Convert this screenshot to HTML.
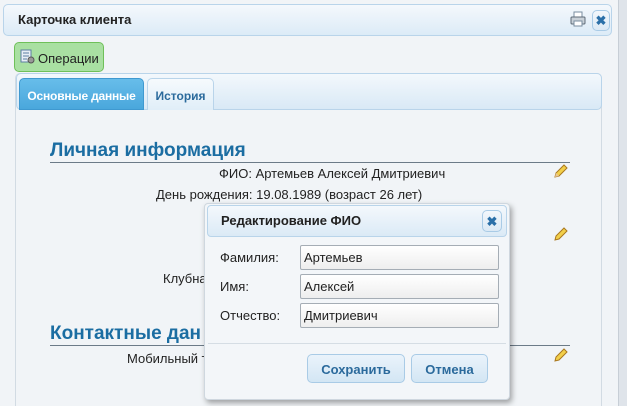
<!DOCTYPE html>
<html><head><meta charset="utf-8"><style>
*{box-sizing:border-box;margin:0;padding:0}
html,body{width:627px;height:406px;overflow:hidden}
body{background:#dfe4ea;font-family:"Liberation Sans",sans-serif;font-size:13px;color:#222;position:relative}
.abs{position:absolute}
.win{left:0;top:0;width:619px;height:406px;background:#f1f4f7;border-right:1px solid #c7ced6}
.hdr{left:3px;top:4px;width:609px;height:32px;border:1px solid #b9d4ea;border-radius:5px;background:linear-gradient(#f4f8fc,#dcebf7)}
.title{left:18px;top:12px;font-weight:bold;font-size:13px;color:#222}
.xbtn{border:1px solid #a9cbe6;border-radius:5px;background:linear-gradient(#f2f7fc,#dbe9f5);color:#2a6fa8;font-weight:bold;text-align:center}
.ops{left:14px;top:42px;width:90px;height:30px;border:1px solid #6fc05a;border-radius:5px;background:#a9e0a2;font-size:13px;padding:8px 0 0 23px;color:#222}
.tabs{left:16px;top:73px;width:586px;height:37px;border:1px solid #b9d4ea;border-radius:5px;background:linear-gradient(#f3f8fc,#d9e9f6)}
.panel{left:15px;top:73px;width:587px;height:333px;border:1px solid #d2dbe3;border-bottom:none;border-radius:5px 5px 0 0}
.tab1{left:19px;top:78px;width:125px;height:32px;border-radius:5px 5px 0 0;background:linear-gradient(#67bdea,#4aa7dc);color:#fff;font-weight:bold;font-size:12px;letter-spacing:-0.2px;text-align:center;padding-top:10px;border:1px solid #3f99d0;white-space:nowrap}
.tab2{left:147px;top:78px;width:67px;height:32px;border-radius:5px 5px 0 0;background:linear-gradient(#f6fafd,#e0eef8);color:#2b6a9c;font-size:12px;font-weight:bold;text-align:center;padding-top:10px;border:1px solid #b9d4ea;border-bottom:none}
.h{font-size:19px;font-weight:bold;color:#1b6da2}
.line{height:1px;background:#6c7b88}
.t{font-size:13px;color:#222;white-space:nowrap}
.dlg{left:204px;top:203px;width:306px;height:197px;background:#f3f6f9;border:1px solid #cfd7df;border-radius:4px;box-shadow:2px 3px 6px rgba(0,0,0,.35)}
.dh{left:207px;top:205px;width:300px;height:32px;border:1px solid #b9d4ea;border-radius:4px;background:linear-gradient(#f4f8fc,#dbeaf6)}
.inp{left:300px;width:199px;height:25px;border:1px solid #a5adb5;border-radius:2px;background:linear-gradient(#fff,#eeeeee);padding:4px 3px;font-size:13px}
.btn{top:354px;height:29px;border:1px solid #a9cbe6;border-radius:5px;background:linear-gradient(#eaf3fb,#d3e6f4);color:#2b6a9c;font-weight:bold;font-size:13px;text-align:center;padding-top:7px}
</style></head><body>
<div class="abs win"></div>
<div class="abs panel"></div>
<div class="abs hdr"></div>
<div class="abs title">Карточка клиента</div>
<svg class="abs" style="left:570px;top:11px" width="16" height="16" viewBox="0 0 16 16"><rect x="4" y="1" width="8" height="6" fill="#fff" stroke="#7a8ea0"/><rect x="1" y="6" width="14" height="7" rx="1" fill="#c9d1d8" stroke="#5f6c78"/><rect x="4" y="10" width="8" height="5" fill="#fff" stroke="#7a8ea0"/></svg>
<div class="abs xbtn" style="left:592px;top:10px;width:18px;height:21px;padding-top:2px">✖</div>
<div class="abs ops">Операции</div>
<svg class="abs" style="left:20px;top:49px" width="15" height="15" viewBox="0 0 15 15"><rect x="1" y="1" width="10" height="12" fill="#e8eef5" stroke="#5c7ea3"/><path d="M3 4h6M3 7h6M3 10h4" stroke="#5c7ea3"/><circle cx="11" cy="11" r="3" fill="#999" stroke="#555"/></svg>
<div class="abs tabs"></div>
<div class="abs tab1">Основные данные</div>
<div class="abs tab2">История</div>
<div class="abs h" style="left:50px;top:140px">Личная информация</div>
<div class="abs line" style="left:50px;top:162px;width:520px"></div>
<div class="abs t" style="left:219px;top:166px">ФИО: Артемьев Алексей Дмитриевич</div>
<div class="abs t" style="left:156px;top:187px">День рождения: 19.08.1989 (возраст 26 лет)</div>
<div class="abs t" style="left:163px;top:271px">Клубна</div>
<div class="abs h" style="left:50px;top:323px">Контактные дан</div>
<div class="abs line" style="left:50px;top:345px;width:520px"></div>
<div class="abs t" style="left:127px;top:351px">Мобильный т</div>
<svg class="abs" style="left:552px;top:164px" width="16" height="16" viewBox="0 0 16 16"><path d="M3 13l1-4 8-8 3 3-8 8z" fill="#f2cf4a" stroke="#a9771e"/><path d="M3 13l1-4 3 3z" fill="#e9c79a"/></svg>
<svg class="abs" style="left:552px;top:227px" width="16" height="16" viewBox="0 0 16 16"><path d="M3 13l1-4 8-8 3 3-8 8z" fill="#f2cf4a" stroke="#a9771e"/></svg>
<svg class="abs" style="left:552px;top:348px" width="16" height="16" viewBox="0 0 16 16"><path d="M3 13l1-4 8-8 3 3-8 8z" fill="#f2cf4a" stroke="#a9771e"/></svg>
<div class="abs dlg"></div>
<div class="abs dh"></div>
<div class="abs" style="left:221px;top:213px;font-weight:bold;font-size:13px">Редактирование ФИО</div>
<div class="abs xbtn" style="left:482px;top:210px;width:20px;height:22px;padding-top:3px">✖</div>
<div class="abs t" style="left:220px;top:250px">Фамилия:</div>
<div class="abs t" style="left:220px;top:279px">Имя:</div>
<div class="abs t" style="left:220px;top:308px">Отчество:</div>
<div class="abs inp" style="top:245px">Артемьев</div>
<div class="abs inp" style="top:274px">Алексей</div>
<div class="abs inp" style="top:303px">Дмитриевич</div>
<div class="abs" style="left:208px;top:343px;width:298px;height:1px;background:#d5dde4"></div>
<div class="abs btn" style="left:307px;width:98px">Сохранить</div>
<div class="abs btn" style="left:411px;width:77px">Отмена</div>
</body></html>
